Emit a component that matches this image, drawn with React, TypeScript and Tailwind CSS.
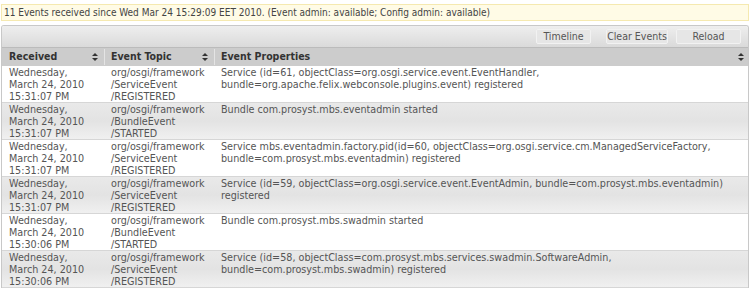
import React from "react";

type EventRow = {
  date: string;
  time: string;
  topic: string[];
  props: string[];
};

const rows: EventRow[] = [
  {
    date: "March 24, 2010",
    time: "15:31:07 PM",
    topic: ["org/osgi/framework", "/ServiceEvent", "/REGISTERED"],
    props: [
      "Service (id=61, objectClass=org.osgi.service.event.EventHandler,",
      "bundle=org.apache.felix.webconsole.plugins.event) registered",
    ],
  },
  {
    date: "March 24, 2010",
    time: "15:31:07 PM",
    topic: ["org/osgi/framework", "/BundleEvent", "/STARTED"],
    props: ["Bundle com.prosyst.mbs.eventadmin started"],
  },
  {
    date: "March 24, 2010",
    time: "15:31:07 PM",
    topic: ["org/osgi/framework", "/ServiceEvent", "/REGISTERED"],
    props: [
      "Service mbs.eventadmin.factory.pid(id=60, objectClass=org.osgi.service.cm.ManagedServiceFactory,",
      "bundle=com.prosyst.mbs.eventadmin) registered",
    ],
  },
  {
    date: "March 24, 2010",
    time: "15:31:07 PM",
    topic: ["org/osgi/framework", "/ServiceEvent", "/REGISTERED"],
    props: [
      "Service (id=59, objectClass=org.osgi.service.event.EventAdmin, bundle=com.prosyst.mbs.eventadmin)",
      "registered",
    ],
  },
  {
    date: "March 24, 2010",
    time: "15:30:06 PM",
    topic: ["org/osgi/framework", "/BundleEvent", "/STARTED"],
    props: ["Bundle com.prosyst.mbs.swadmin started"],
  },
  {
    date: "March 24, 2010",
    time: "15:30:06 PM",
    topic: ["org/osgi/framework", "/ServiceEvent", "/REGISTERED"],
    props: [
      "Service (id=58, objectClass=com.prosyst.mbs.services.swadmin.SoftwareAdmin,",
      "bundle=com.prosyst.mbs.swadmin) registered",
    ],
  },
];

function SortIcon() {
  return (
    <svg width="6" height="8" viewBox="0 0 6 8" className="shrink-0">
      <path d="M3 0 L6 3 H0 Z" fill="#333" />
      <path d="M0 5 H6 L3 8 Z" fill="#333" />
    </svg>
  );
}

function ToolButton({ label, w }: { label: string; w: string }) {
  return (
    <button
      className={`${w} h-[15px] shrink-0 whitespace-nowrap rounded-[2px] border border-[#f2f2f2] bg-[#e6e6e6] text-center text-[10.5px] leading-[13px] text-[#555]`}
    >
      {label}
    </button>
  );
}

export default function App() {
  return (
    <div
      className="h-[288px] w-[750px] overflow-hidden bg-white pt-1 text-[10.7px] text-[#555]"
      style={{ fontFamily: "'DejaVu Sans Condensed', 'Liberation Sans', sans-serif" }}
    >
      {/* status line */}
      <div className="mx-[1px] h-[17px] whitespace-nowrap border border-[#f5e9b0] bg-[#fffbe6] pl-[2px] text-[10px] leading-[15px] text-[#444]">
        11 Events received since Wed Mar 24 15:29:09 EET 2010. (Event admin: available; Config admin: available)
      </div>

      <div className="mx-[1px] mt-[4px] overflow-hidden rounded-t-[3px] border border-b-0 border-[#c8c8c8]">
        {/* toolbar */}
        <div className="flex h-[21px] items-center justify-end gap-[8px] bg-gradient-to-b from-[#eeeeee] to-[#dadada] pr-[7px]">
          <ToolButton label="Timeline" w="w-[55px] mr-[7px]" />
          <ToolButton label="Clear Events" w="w-[62px]" />
          <ToolButton label="Reload" w="w-[65px]" />
        </div>

        {/* header */}
        <div className="flex h-[19px] items-center border-t border-[#bbbbbb] bg-[#cccccc] text-[10.5px] font-bold text-[#333]">
          <div className="flex w-[103px] shrink-0 items-center justify-between border-r border-[#e4e4e4] pl-[7px] pr-[6px]">
            <span>Received</span>
            <SortIcon />
          </div>
          <div className="flex w-[110px] shrink-0 items-center justify-between border-r border-[#e4e4e4] pl-[6px] pr-[6px]">
            <span>Event Topic</span>
            <SortIcon />
          </div>
          <div className="flex flex-1 items-center justify-between pl-[6px] pr-[4px]">
            <span>Event Properties</span>
            <SortIcon />
          </div>
        </div>

        {/* rows */}
        {rows.map((r, i) => (
          <div
            key={i}
            className={`flex h-[37px] whitespace-nowrap border-b border-[#d6d6d6] leading-[12px] ${
              i % 2 === 1
                ? "bg-gradient-to-b from-[#e9e9e9] via-[#e3e3e3] to-[#f0f0f0]"
                : "bg-white"
            }`}
          >
            <div className="w-[103px] shrink-0 pl-[7px] pt-[1px]">
              <div>Wednesday,</div>
              <div>{r.date}</div>
              <div>{r.time}</div>
            </div>
            <div className="w-[110px] shrink-0 pl-[6px] pt-[1px]">
              {r.topic.map((t) => (
                <div key={t}>{t}</div>
              ))}
            </div>
            <div className="min-w-0 flex-1 pl-[6px] pt-[1px]">
              {r.props.map((p) => (
                <div key={p}>{p}</div>
              ))}
            </div>
          </div>
        ))}
      </div>
    </div>
  );
}
